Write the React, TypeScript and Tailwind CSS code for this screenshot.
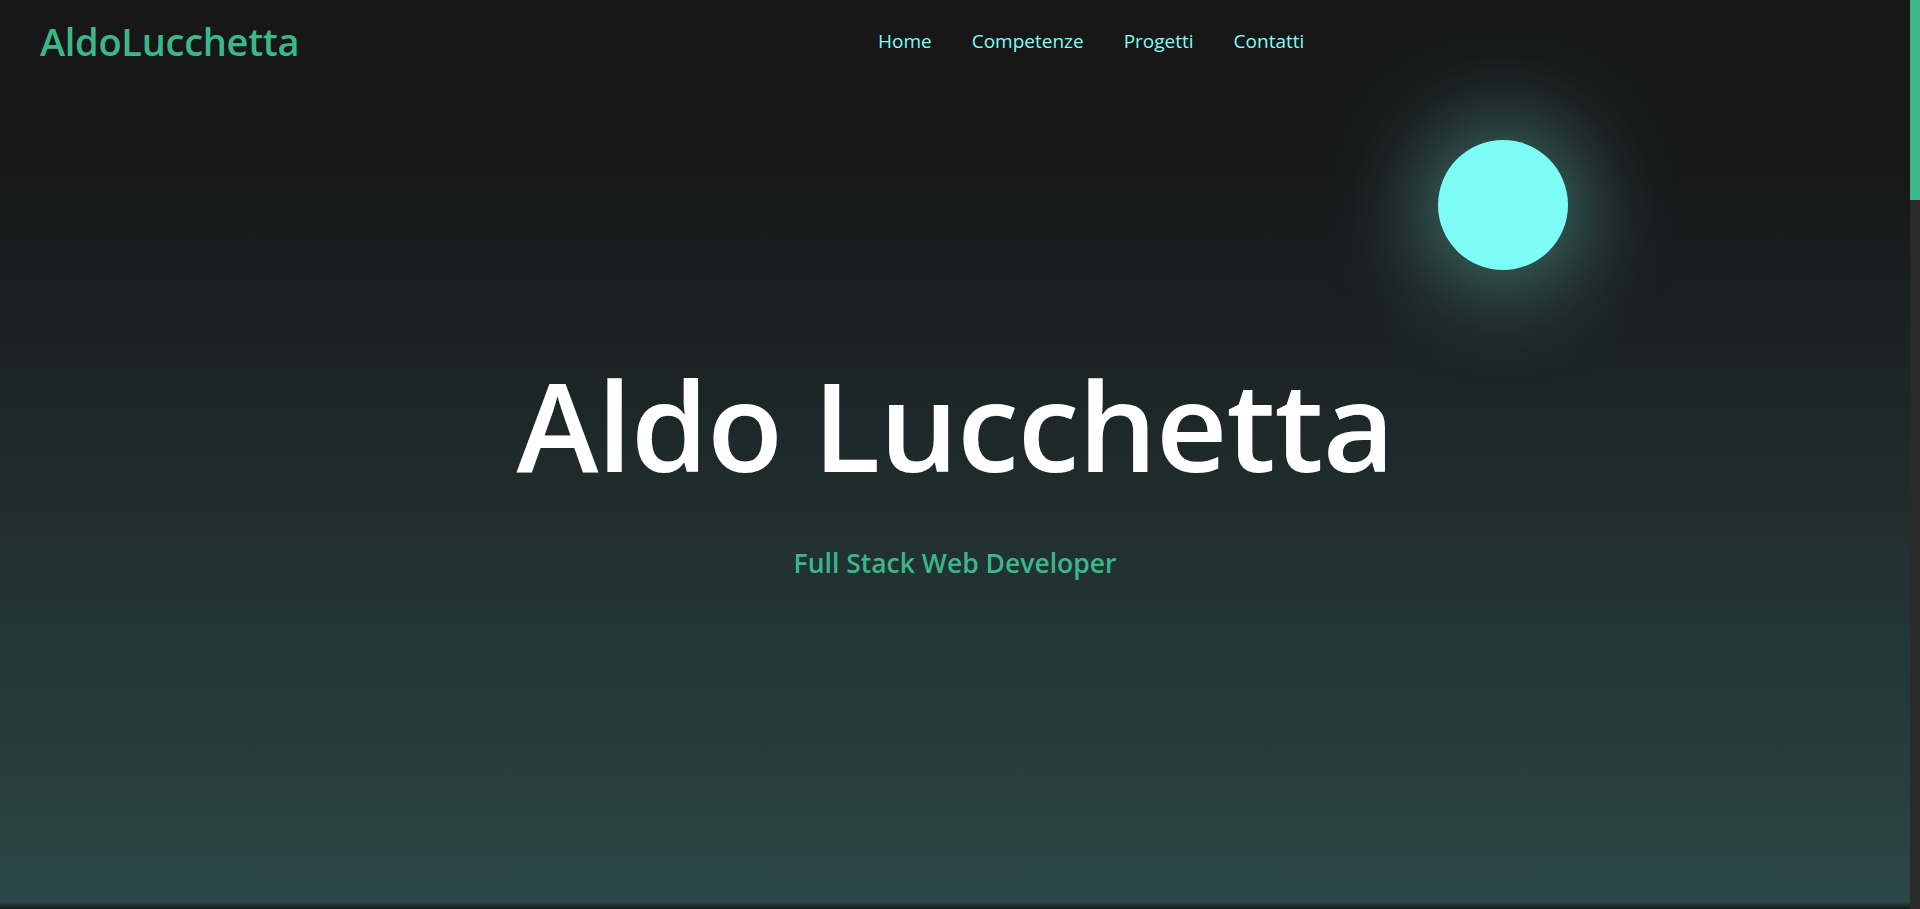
import React from "react";

const font = { fontFamily: '"Segoe UI", "Open Sans", "Noto Sans", sans-serif' };

export default function App() {
  return (
    <div style={font} className="flex h-[909px] w-full overflow-hidden bg-[#171717]">
      <div className="min-w-0 flex-1">
        <section className="relative flex h-[909px] flex-col overflow-hidden bg-[linear-gradient(180deg,#171717_0%,#171717_18%,#2b4747_100%)]">
          <header className="flex h-[82px] shrink-0 items-center px-[40px]">
            <div className="w-[838px] shrink-0 text-[38px] font-semibold leading-none tracking-[-0.3px] text-[#3bb78a]">
              AldoLucchetta
            </div>
            <nav className="flex items-center gap-[40px] text-[19px] leading-none text-[#7dfdf5]">
              <a>Home</a>
              <a>Competenze</a>
              <a>Progetti</a>
              <a>Contatti</a>
            </nav>
          </header>

          <div className="absolute left-[1438px] top-[140px] h-[130px] w-[130px] rounded-full bg-[#7dfdf5] shadow-[0_0_100px_14px_rgba(125,253,245,0.45)]" />

          <main className="flex flex-1 flex-col items-center pt-[280px]">
            <h1 className="text-[124px] font-semibold leading-none tracking-[-1px] text-white">
              Aldo Lucchetta
            </h1>
            <p className="mt-[64px] text-[26.5px] font-semibold leading-none text-[#3bb78a]">
              Full Stack Web Developer
            </p>
          </main>

          <div className="absolute bottom-0 left-0 h-[7px] w-full bg-[linear-gradient(180deg,rgba(20,24,24,0)_0%,#161a1a_100%)]" />
        </section>
      </div>
      <div className="flex h-[909px] w-[10px] shrink-0 flex-col bg-[#2a2a2a]">
        <div className="h-[200px] w-full bg-[#3bb78a]" />
      </div>
    </div>
  );
}
